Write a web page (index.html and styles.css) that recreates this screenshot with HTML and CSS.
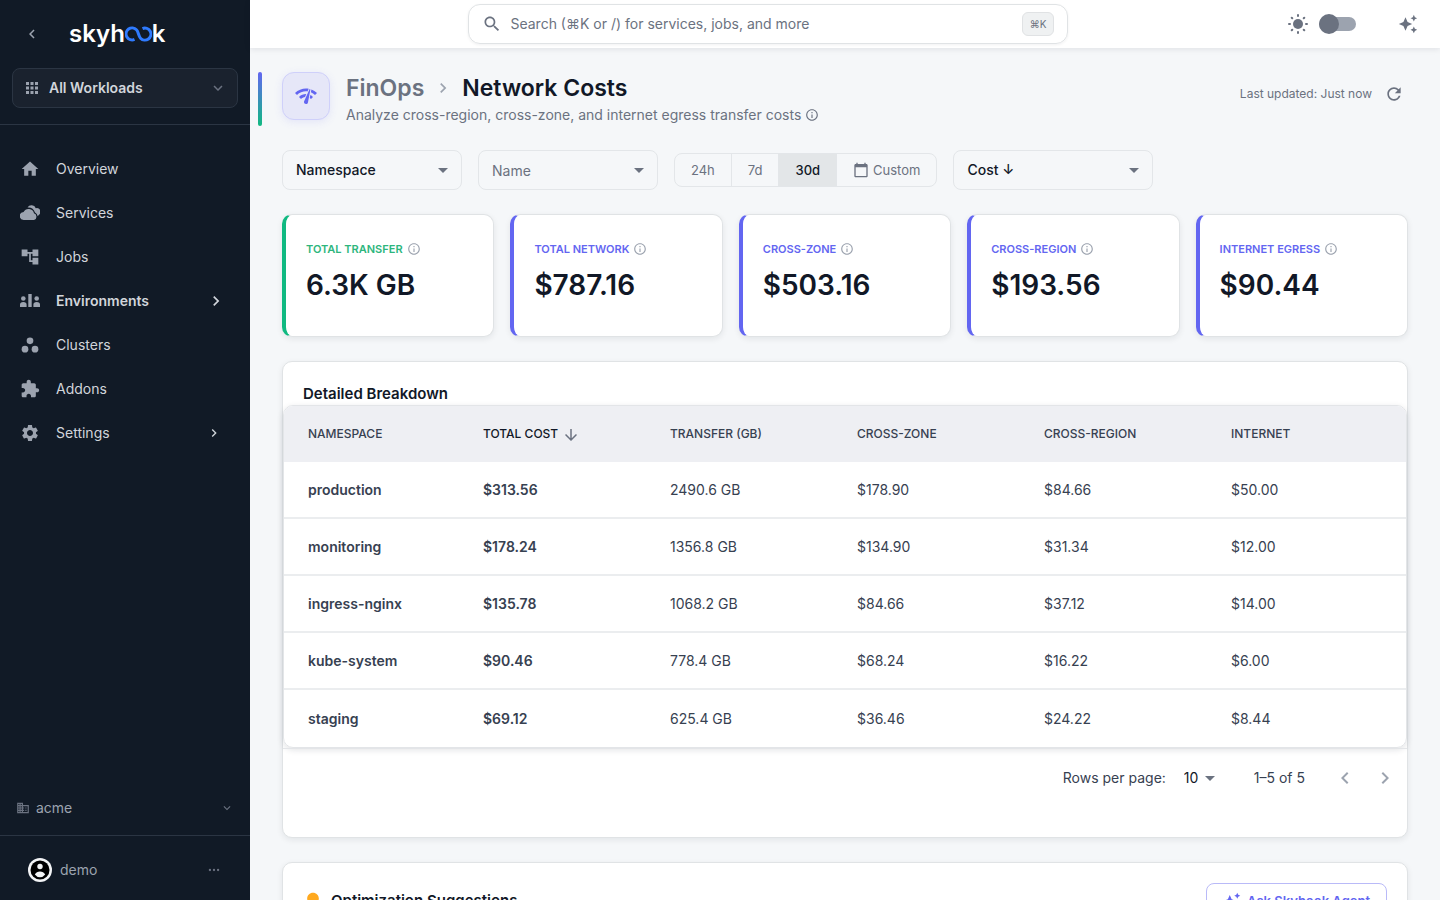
FILE: index.html
```html
<!DOCTYPE html>
<html lang="en">
<head>
  <meta charset="UTF-8">
  <meta name="viewport" content="width=device-width, initial-scale=1.0">
  <title>Network Costs - Skyhook</title>
  <link rel="stylesheet" href="styles.css">
</head>
<body>
  <!-- Shared icons -->
  <svg class="sprite" aria-hidden="true">
    <symbol id="i-info" viewBox="0 0 24 24"><path d="M11 7h2v2h-2zm0 4h2v6h-2zm1-9C6.48 2 2 6.48 2 12s4.480 10 10 10 10-4.480 10-10S17.520 2 12 2zm0 18c-4.410 0-8-3.590-8-8s3.590-8 8-8 8 3.590 8 8-3.590 8-8 8z"/></symbol>
    <symbol id="i-caret" viewBox="0 0 24 24"><path d="M7 10l5 5 5-5z"/></symbol>
    <symbol id="i-down" viewBox="0 0 24 24"><path d="M7.410 8.590 12 13.170l4.590-4.580L18 10l-6 6-6-6z"/></symbol>
    <symbol id="i-left" viewBox="0 0 24 24"><path d="M15.410 7.410 14 6l-6 6 6 6 1.410-1.410L10.830 12z"/></symbol>
    <symbol id="i-right" viewBox="0 0 24 24"><path d="M10 6 8.590 7.410 13.170 12l-4.580 4.590L10 18l6-6z"/></symbol>
    <symbol id="i-sparkle" viewBox="0 0 24 24"><path d="M19 9l1.250-2.750L23 5l-2.750-1.250L19 1l-1.250 2.750L15 5l2.750 1.250zm-7.500.500L9 4 6.500 9.500 1 12l5.500 2.500L9 20l2.500-5.500L17 12zM19 15l-1.250 2.750L15 19l2.750 1.250L19 23l1.250-2.750L23 19l-2.750-1.250z"/></symbol>
  </svg>

  <div class="app">
    <aside class="sidebar">
      <div class="brand">
        <button class="icon-button collapse" aria-label="Collapse sidebar"><svg class="icon-18"><use href="#i-left"/></svg></button>
        <a class="logo" href="#" aria-label="skyhook">skyh<svg class="logo-loop" viewBox="0 0 27 16"><path d="M9.500 13.400A6 6 0 1 1 11.500 3.800C13.500 5.800 13.500 10.200 15.500 12.200A6 6 0 1 0 17.500 2.600"/></svg>k</a>
      </div>
      <div class="workloads-wrap">
        <button class="workloads">
          <svg class="icon-18" viewBox="0 0 24 24"><path d="M4 8h4V4H4zm6 12h4v-4h-4zm-6 0h4v-4H4zm0-6h4v-4H4zm6 0h4v-4h-4zm6-10v4h4V4zm-6 4h4V4h-4zm6 6h4v-4h-4zm0 6h4v-4h-4z"/></svg>
          <span>All Workloads</span>
          <svg class="icon-18 dim"><use href="#i-down"/></svg>
        </button>
      </div>
      <nav class="nav">
        <a href="#"><svg class="icon-20" viewBox="0 0 24 24"><path d="M10 20v-6h4v6h5v-8h3L12 3 2 12h3v8z"/></svg><span>Overview</span></a>
        <a href="#"><svg class="icon-20" viewBox="0 0 20 20"><path d="M4 17a4 4 0 0 1-.400-8 5.600 5.600 0 0 1 10.400 1.300A3.500 3.500 0 0 1 14 17z"/><path d="M7.500 4.500a4.600 4.600 0 0 1 8.300.700 3.700 3.700 0 0 1 3.500 6.300l-1.600 1.700a5 5 0 0 0-2.700-3.600A7.200 7.200 0 0 0 7.500 4.500z"/></svg><span>Services</span></a>
        <a href="#"><svg class="icon-20" viewBox="0 0 24 24"><path d="M22 11V3h-7v3H9V3H2v8h7V8h2v10h4v3h7v-8h-7v3h-2V8h2v3z"/></svg><span>Jobs</span></a>
        <a href="#" class="active"><svg class="icon-20" viewBox="0 0 20 20"><circle cx="3.300" cy="7.500" r="2.300"/><circle cx="16.700" cy="7.500" r="2.300"/><path d="M8.300 3h3.400v13H8.300zM0 16v-2.500Q0 11 3.300 11t3.300 2.500V16zM13.400 16v-2.500q0-2.500 3.300-2.500t3.300 2.500V16z"/></svg><span>Environments</span><svg class="icon-20 arrow"><use href="#i-right"/></svg></a>
        <a href="#"><svg class="icon-20" viewBox="0 0 24 24"><circle cx="6" cy="17" r="4"/><circle cx="12" cy="7" r="4"/><circle cx="18" cy="17" r="4"/></svg><span>Clusters</span></a>
        <a href="#"><svg class="icon-20" viewBox="0 0 24 24"><path d="M20.500 11H19V7c0-1.100-.900-2-2-2h-4V3.500C13 2.120 11.880 1 10.500 1S8 2.120 8 3.500V5H4c-1.100 0-1.990.900-1.990 2v3.800H3.500c1.490 0 2.700 1.210 2.700 2.700s-1.210 2.700-2.700 2.700H2V20c0 1.100.900 2 2 2h3.800v-1.500c0-1.490 1.210-2.700 2.700-2.700s2.700 1.210 2.700 2.700V22H17c1.100 0 2-.900 2-2v-4h1.500c1.380 0 2.500-1.120 2.500-2.500S21.880 11 20.500 11z"/></svg><span>Addons</span></a>
        <a href="#"><svg class="icon-20" viewBox="0 0 24 24"><path d="M19.140 12.940c.040-.300.060-.610.060-.940 0-.320-.020-.640-.070-.940l2.030-1.580c.180-.140.230-.410.120-.610l-1.920-3.320c-.120-.220-.370-.290-.590-.220l-2.390.960c-.500-.380-1.030-.700-1.620-.940l-.360-2.540c-.040-.240-.240-.410-.480-.410h-3.840c-.240 0-.430.170-.470.410l-.360 2.540c-.590.240-1.130.570-1.620.940l-2.390-.960c-.220-.080-.470 0-.590.220L2.740 8.870c-.120.210-.080.470.120.610l2.030 1.580c-.050.300-.090.630-.090.940s.020.640.070.940l-2.030 1.580c-.180.140-.230.410-.120.610l1.920 3.320c.120.220.370.290.590.220l2.390-.960c.500.380 1.030.700 1.620.940l.360 2.540c.050.240.240.410.480.410h3.840c.240 0 .440-.170.470-.410l.360-2.540c.590-.240 1.130-.560 1.620-.940l2.390.960c.220.080.470 0 .590-.220l1.920-3.320c.120-.220.070-.470-.120-.610zM12 15.600c-1.980 0-3.600-1.620-3.600-3.600s1.620-3.600 3.600-3.600 3.600 1.620 3.600 3.600-1.620 3.600-3.600 3.600z"/></svg><span>Settings</span><svg class="icon-16 arrow"><use href="#i-right"/></svg></a>
      </nav>
      <button class="org">
        <svg class="icon-14" viewBox="0 0 24 24"><path d="M12 7V3H2v18h20V7zM6 19H4v-2h2zm0-4H4v-2h2zm0-4H4V9h2zm0-4H4V5h2zm4 12H8v-2h2zm0-4H8v-2h2zm0-4H8V9h2zm0-4H8V5h2zm10 12h-8v-2h2v-2h-2v-2h2v-2h-2V9h8zm-2-8h-2v2h2zm0 4h-2v2h2z"/></svg>
        <span>acme</span>
        <svg class="icon-14"><use href="#i-down"/></svg>
      </button>
      <button class="user">
        <svg class="avatar" viewBox="0 0 24 24"><circle cx="12" cy="12" r="12" fill="#f3f4f6"/><circle cx="12" cy="12" r="9.500" fill="#000"/><circle cx="12" cy="8.500" r="2.700" fill="#f3f4f6"/><path d="M6.800 16.500Q8.500 13.400 12 13.400t5.200 3.100Q15 19.300 12 19.300t-5.200-2.800z" fill="#f3f4f6"/></svg>
        <span>demo</span>
        <svg class="icon-14" viewBox="0 0 24 24"><circle cx="5" cy="12" r="2"/><circle cx="12" cy="12" r="2"/><circle cx="19" cy="12" r="2"/></svg>
      </button>
    </aside>

    <div class="content">
      <header class="topbar">
        <label class="search">
          <svg class="icon-20" viewBox="0 0 24 24"><path d="M15.500 14h-.790l-.280-.270C15.410 12.590 16 11.110 16 9.500 16 5.910 13.090 3 9.500 3S3 5.910 3 9.500 5.910 16 9.500 16c1.610 0 3.090-.590 4.230-1.570l.270.280v.790l5 4.990L20.490 19zm-6 0C7.010 14 5 11.990 5 9.500S7.010 5 9.500 5 14 7.010 14 9.500 11.990 14 9.500 14z"/></svg>
          <input type="search" placeholder="Search (⌘K or /) for services, jobs, and more" aria-label="Search">
          <kbd>⌘K</kbd>
        </label>
        <div class="top-actions">
          <label class="theme">
            <svg class="icon-20" viewBox="0 0 20 20"><circle cx="10" cy="10" r="5"/><g class="rays"><path d="M10 1v1M10 18v1M1 10h1M18 10h1M3.700 3.700l.600.600M15.700 15.700l.600.600M3.700 16.300l.600-.600M15.700 4.300l.600-.600"/></g></svg>
            <input type="checkbox" class="switch" aria-label="Dark mode">
          </label>
          <button class="icon-button" aria-label="Assistant"><svg class="icon-20"><use href="#i-sparkle"/></svg></button>
        </div>
      </header>

      <main class="page">
        <div class="page-head">
          <div class="page-icon"><svg class="icon-24" viewBox="0 0 24 24"><path d="M15.900 5c-.170 0-.320.090-.410.230l-.070.150-5.180 11.650c-.160.290-.260.610-.260.960 0 1.110.900 2.010 2.010 2.010.960 0 1.770-.680 1.960-1.590l.010-.030L16.400 5.500c0-.280-.220-.500-.500-.500zM1 9l2 2c2.880-2.880 6.790-4.080 10.530-3.620l1.190-2.680C9.890 3.840 4.740 5.270 1 9zm20 2 2-2c-1.640-1.640-3.550-2.820-5.590-3.570l-.530 2.820c1.500.620 2.900 1.530 4.120 2.750zm-4 4 2-2c-.800-.800-1.700-1.420-2.660-1.890l-.550 2.920c.420.270.830.590 1.210.970zM5 13l2 2c1.130-1.130 2.560-1.790 4.030-2l1.280-2.880c-2.630-.080-5.300.870-7.310 2.880z"/></svg></div>
          <div class="page-title">
            <h1><a href="#">FinOps</a><svg class="icon-20"><use href="#i-right"/></svg><span>Network Costs</span></h1>
            <p>Analyze cross-region, cross-zone, and internet egress transfer costs <svg class="icon-14"><use href="#i-info"/></svg></p>
          </div>
          <div class="updated">
            <span>Last updated: Just now</span>
            <button class="icon-button" aria-label="Refresh"><svg class="icon-20" viewBox="0 0 24 24"><path d="M17.650 6.350C16.200 4.900 14.210 4 12 4c-4.420 0-7.990 3.580-7.990 8s3.570 8 7.990 8c3.730 0 6.840-2.550 7.730-6h-2.080c-.820 2.330-3.040 4-5.650 4-3.310 0-6-2.690-6-6s2.690-6 6-6c1.660 0 3.140.690 4.220 1.780L13 11h7V4z"/></svg></button>
          </div>
        </div>

        <div class="filters">
          <div class="field">
            <select aria-label="Group by"><option>Namespace</option></select>
            <svg class="icon-24 caret"><use href="#i-caret"/></svg>
          </div>
          <div class="field">
            <input type="text" placeholder="Name" aria-label="Name">
            <svg class="icon-24 caret"><use href="#i-caret"/></svg>
          </div>
          <div class="range">
            <button>24h</button>
            <button>7d</button>
            <button class="selected">30d</button>
            <button><svg class="icon-16" viewBox="0 0 24 24"><path d="M20 3h-1V1h-2v2H7V1H5v2H4c-1.100 0-2 .900-2 2v16c0 1.100.900 2 2 2h16c1.100 0 2-.900 2-2V5c0-1.100-.900-2-2-2zm0 18H4V8h16z"/></svg>Custom</button>
          </div>
          <div class="field wide">
            <select aria-label="Sort by"><option>Cost ↓</option></select>
            <svg class="icon-24 caret"><use href="#i-caret"/></svg>
          </div>
        </div>

        <section class="stats">
          <div class="stat green"><h2>TOTAL TRANSFER <svg class="icon-14"><use href="#i-info"/></svg></h2><strong>6.3K GB</strong></div>
          <div class="stat"><h2>TOTAL NETWORK <svg class="icon-14"><use href="#i-info"/></svg></h2><strong>$787.16</strong></div>
          <div class="stat"><h2>CROSS-ZONE <svg class="icon-14"><use href="#i-info"/></svg></h2><strong>$503.16</strong></div>
          <div class="stat"><h2>CROSS-REGION <svg class="icon-14"><use href="#i-info"/></svg></h2><strong>$193.56</strong></div>
          <div class="stat"><h2>INTERNET EGRESS <svg class="icon-14"><use href="#i-info"/></svg></h2><strong>$90.44</strong></div>
        </section>

        <section class="panel breakdown">
          <h2>Detailed Breakdown</h2>
          <div class="table-wrap">
            <table>
              <thead>
                <tr>
                  <th>NAMESPACE</th>
                  <th class="sorted">TOTAL COST <svg class="icon-18" viewBox="0 0 24 24"><path d="m20 12-1.410-1.410L13 16.170V4h-2v12.170l-5.580-5.590L4 12l8 8z"/></svg></th>
                  <th>TRANSFER (GB)</th>
                  <th>CROSS-ZONE</th>
                  <th>CROSS-REGION</th>
                  <th>INTERNET</th>
                </tr>
              </thead>
              <tbody>
                <tr><td>production</td><td>$313.56</td><td>2490.6 GB</td><td>$178.90</td><td>$84.66</td><td>$50.00</td></tr>
                <tr><td>monitoring</td><td>$178.24</td><td>1356.8 GB</td><td>$134.90</td><td>$31.34</td><td>$12.00</td></tr>
                <tr><td>ingress-nginx</td><td>$135.78</td><td>1068.2 GB</td><td>$84.66</td><td>$37.12</td><td>$14.00</td></tr>
                <tr><td>kube-system</td><td>$90.46</td><td>778.4 GB</td><td>$68.24</td><td>$16.22</td><td>$6.00</td></tr>
                <tr><td>staging</td><td>$69.12</td><td>625.4 GB</td><td>$36.46</td><td>$24.22</td><td>$8.44</td></tr>
              </tbody>
            </table>
          </div>
          <div class="pagination">
            <label for="rows">Rows per page:</label>
            <div class="rows">
              <select id="rows"><option>10</option></select>
              <svg class="icon-24 caret"><use href="#i-caret"/></svg>
            </div>
            <span class="count">1–5 of 5</span>
            <button class="icon-button" aria-label="Previous page"><svg class="icon-24"><use href="#i-left"/></svg></button>
            <button class="icon-button" aria-label="Next page"><svg class="icon-24"><use href="#i-right"/></svg></button>
          </div>
        </section>

        <section class="panel suggestions">
          <svg class="icon-20 bulb" viewBox="0 0 24 24"><path d="M9 21c0 .550.450 1 1 1h4c.550 0 1-.450 1-1v-1H9zm3-19C8.140 2 5 5.140 5 9c0 2.380 1.190 4.470 3 5.740V17c0 .550.450 1 1 1h6c.550 0 1-.450 1-1v-2.260c1.810-1.270 3-3.360 3-5.740 0-3.860-3.140-7-7-7z"/></svg>
          <h2>Optimization Suggestions</h2>
          <button class="ask"><svg class="icon-18"><use href="#i-sparkle"/></svg>Ask Skyhook Agent</button>
        </section>
      </main>
    </div>
  </div>
</body>
</html>
```
FILE: styles.css
```css
* {
  box-sizing: border-box;
}
body {
  margin: 0;
  font-family: Inter, "Noto Sans", sans-serif;
  font-size: 14px;
  line-height: 20px;
  color: #374151;
}
h1, h2, p {
  margin: 0;
}
a {
  color: inherit;
  text-decoration: none;
}
button, input, select {
  font: inherit;
  color: inherit;
  background: none;
  border: none;
  padding: 0;
  margin: 0;
}
button {
  cursor: pointer;
}
input:focus, select:focus {
  outline: none;
}
select, input[type="search"] {
  appearance: none;
}
svg {
  fill: currentColor;
  flex-shrink: 0;
}
.sprite { display: none; }
.icon-14 { width: 14px; height: 14px; }
.icon-16 { width: 16px; height: 16px; }
.icon-18 { width: 18px; height: 18px; }
.icon-20 { width: 20px; height: 20px; }
.icon-24 { width: 24px; height: 24px; }
.icon-button {
  display: flex;
}
.app {
  display: flex;
  height: 100vh;
  overflow: hidden;
}

/* Sidebar */
.sidebar {
  display: flex;
  flex-direction: column;
  width: 250px;
  flex-shrink: 0;
  background: #111a26;
  color: #9ca3af;
}
.brand {
  display: flex;
  align-items: center;
  gap: 28px;
  height: 68px;
  padding: 0 23px;
}
.logo {
  display: flex;
  align-items: center;
  font-size: 24px;
  line-height: 28px;
  font-weight: 600;
  color: #fff;
}
.logo-loop {
  width: 27px;
  height: 16px;
  fill: none;
  stroke: #2f7bff;
  stroke-width: 3;
}
.workloads-wrap {
  padding: 0 12px 16px;
  border-bottom: 1px solid #2b3543;
}
.workloads {
  display: flex;
  align-items: center;
  gap: 8px;
  width: 100%;
  height: 40px;
  padding: 0 10px;
  border: 1px solid #2b3543;
  border-radius: 8px;
  background: #1a222e;
  color: #d1d5db;
  font-weight: 600;
}
.workloads span, .nav span, .org span, .user span {
  flex: 1;
  text-align: left;
}
.workloads svg { color: #9ca3af; }
.workloads .dim { color: #6b7280; }
.nav {
  display: flex;
  flex-direction: column;
  flex: 1;
  padding: 22px 0;
}
.nav a {
  display: flex;
  align-items: center;
  gap: 16px;
  height: 44px;
  padding: 0 24px 0 20px;
}
.nav span { color: #d1d5db; }
.nav .active { font-weight: 600; }
.nav .arrow { color: #d1d5db; }
.nav .icon-16 { margin-right: 4px; }
.org, .user {
  display: flex;
  align-items: center;
  gap: 6px;
}
.org {
  height: 55px;
  padding: 0 16px;
}
.org svg { color: #6b7280; }
.user {
  gap: 8px;
  height: 65px;
  padding: 4px 29px 0 28px;
  border-top: 1px solid #2b3543;
}
.user .avatar {
  width: 24px;
  height: 24px;
}
.user .icon-14 { color: #6b7280; }

/* Top bar */
.content {
  display: flex;
  flex-direction: column;
  flex: 1;
  min-width: 0;
  background: #f5f7f9;
}
.topbar {
  display: grid;
  grid-template-columns: 5fr minmax(0, 600px) 8fr;
  align-items: center;
  height: 48px;
  flex-shrink: 0;
  padding: 0 22px 0 0;
  background: #fff;
  box-shadow: 0 1px 6px rgba(17, 24, 39, 0.1);
  color: #6b7280;
}
.search {
  grid-column: 2;
  display: flex;
  align-items: center;
  gap: 8px;
  height: 40px;
  padding: 0 13px;
  border: 1px solid #e0e3e5;
  border-radius: 12px;
  box-shadow: 0 1px 3px rgba(17, 24, 39, 0.06);
}
.search input {
  flex: 1;
  min-width: 0;
}
::placeholder {
  color: #6b7280;
  opacity: 1;
}
kbd {
  padding: 3px 7px;
  border: 1px solid #e0e2e4;
  border-radius: 6px;
  background: #eff1f2;
  font: 10px/16px Inter, "Noto Sans", sans-serif;
}
.top-actions {
  display: flex;
  align-items: center;
  justify-content: flex-end;
  gap: 42px;
}
.theme {
  display: flex;
  align-items: center;
  gap: 11px;
}
.rays {
  fill: none;
  stroke: currentColor;
  stroke-width: 2;
  stroke-linecap: round;
}
.switch {
  position: relative;
  appearance: none;
  width: 37px;
  height: 14px;
  border-radius: 7px;
  background: #9ca3af;
}
.switch::before {
  content: "";
  position: absolute;
  top: -3px;
  left: 0;
  width: 20px;
  height: 20px;
  border-radius: 50%;
  background: #6b7280;
}

/* Page */
.page {
  flex: 1;
  min-height: 0;
  overflow: hidden;
  padding: 24px 32px;
}
.page-head {
  position: relative;
  display: flex;
  gap: 16px;
  height: 54px;
  margin-bottom: 24px;
}
.page-head::before {
  content: "";
  position: absolute;
  left: -24px;
  top: 0;
  bottom: 0;
  width: 4px;
  border-radius: 2px;
  background: linear-gradient(#6366f1, #10b981);
}
.page-icon {
  display: flex;
  align-items: center;
  justify-content: center;
  width: 48px;
  height: 48px;
  border: 1px solid #cfd0fa;
  border-radius: 12px;
  background: #e6e7f8;
  box-shadow: 0 2px 8px rgba(99, 102, 241, 0.12);
  color: #6366f1;
}
.page-title { flex: 1; }
h1 {
  display: flex;
  align-items: center;
  gap: 9px;
  font-size: 23px;
  line-height: 32px;
  font-weight: 600;
  color: #111827;
}
h1 a { color: #6b7280; }
h1 svg { color: #9ca3af; }
.page-title p {
  display: flex;
  align-items: center;
  gap: 4px;
  line-height: 22px;
  color: #6b7280;
}
.updated {
  display: flex;
  align-items: center;
  gap: 12px;
  height: 44px;
  padding-right: 4px;
  font-size: 12px;
  color: #6b7280;
}
.filters {
  display: flex;
  align-items: center;
  gap: 16px;
  margin-bottom: 24px;
}
.field {
  display: flex;
  align-items: center;
  position: relative;
  width: 180px;
  height: 40px;
  border: 1px solid #e3e6e9;
  border-radius: 8px;
}
.field.wide { width: 200px; }
.field select, .field input {
  width: 100%;
  height: 100%;
  padding: 0 32px 0 13px;
}
.field select {
  font-weight: 500;
  color: #111827;
}
.caret {
  position: absolute;
  right: 6px;
  color: #6b7280;
  pointer-events: none;
}
.range {
  display: flex;
  height: 34px;
  border: 1px solid #e3e6e9;
  border-radius: 8px;
  overflow: hidden;
  font-size: 13px;
  color: #6b7280;
}
.range button {
  display: flex;
  align-items: center;
  gap: 4px;
  padding: 0 16px;
}
.range button + button { border-left: 1px solid #e3e6e9; }
.range .selected {
  background: #e3e6e8;
  color: #111827;
  font-weight: 500;
}

/* Stat cards */
.stats {
  display: grid;
  grid-template-columns: repeat(5, 1fr);
  gap: 16px;
  margin-bottom: 24px;
}
.stat {
  height: 123px;
  padding: 24px 20px;
  border: 1px solid #e0e3e5;
  border-left: 4px solid #6366f1;
  border-radius: 10px;
  background: #fff;
  box-shadow: 0 2px 6px rgba(17, 24, 39, 0.08);
}
.stat h2 {
  display: flex;
  align-items: center;
  gap: 4px;
  font-size: 11px;
  font-weight: 600;
  color: #6366f1;
}
.stat.green { border-left-color: #10b981; }
.stat.green h2 { color: #2eb67d; }
.stat h2 svg { color: #9ca3af; }
.stat strong {
  display: block;
  margin-top: 8px;
  font-size: 28px;
  line-height: 36px;
  font-weight: 600;
  color: #111827;
}

/* Panels */
.panel {
  border: 1px solid #e0e3e5;
  border-radius: 10px;
  background: #fff;
  box-shadow: 0 2px 6px rgba(17, 24, 39, 0.08);
}
.panel h2 {
  font-size: 15px;
  line-height: 22px;
  font-weight: 600;
  color: #111827;
}
.breakdown {
  min-height: 477px;
  margin-bottom: 24px;
}
.breakdown h2 { padding: 21px 20px 0; }
.table-wrap {
  border: 1px solid #e3e5e8;
  border-radius: 10px;
  overflow: hidden;
  box-shadow: 0 2px 6px rgba(17, 24, 39, 0.12);
}
table {
  width: 100%;
  table-layout: fixed;
  border-collapse: separate;
  border-spacing: 0;
}
th, td {
  height: 57px;
  padding: 0 24px;
  text-align: left;
}
th {
  height: 56px;
  background: #eeeff3;
  font-size: 12px;
  font-weight: 500;
  white-space: nowrap;
}
th:first-child { width: 175px; }
th:last-child { width: 199px; }
th.sorted { color: #111827; }
th svg {
  margin-left: 1px;
  color: #6b7280;
  vertical-align: middle;
}
td { border-bottom: 2px solid #ebedef; }
tr:last-child td { border-bottom: none; }
td:nth-child(-n+2) { font-weight: 600; }
.pagination {
  display: flex;
  align-items: center;
  justify-content: flex-end;
  height: 58px;
  padding-right: 10px;
  border-top: 1px solid #e3e5e8;
}
.rows {
  position: relative;
  display: flex;
  align-items: center;
  width: 46px;
  margin: 0 32px 0 10px;
}
.rows select {
  width: 100%;
  padding-left: 8px;
  color: #111827;
}
.rows .caret { right: 0; }
.count { margin-right: 28px; }
.pagination .icon-button {
  color: #9ca3af;
}
.pagination .icon-button + .icon-button { margin-left: 16px; }
.suggestions {
  display: flex;
  align-items: center;
  gap: 8px;
  padding: 20px;
}
.suggestions h2 { flex: 1; }
.bulb { color: #ffa91f; }
.ask {
  display: flex;
  align-items: center;
  gap: 6px;
  height: 36px;
  padding: 0 16px;
  border: 1px solid #b9baf8;
  border-radius: 8px;
  color: #6366f1;
  font-size: 13px;
  font-weight: 600;
}
```
